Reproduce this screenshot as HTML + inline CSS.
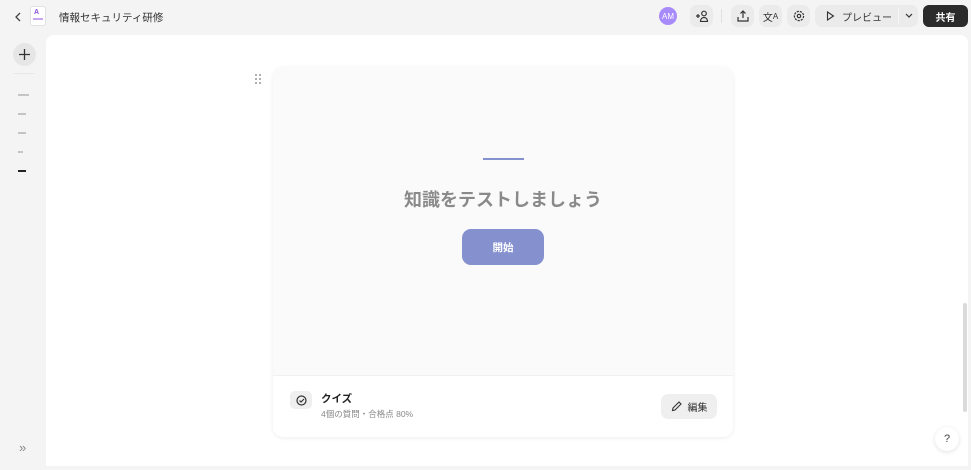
<!DOCTYPE html>
<html><head><meta charset="utf-8"><style>
*{margin:0;padding:0;box-sizing:border-box}
body{width:971px;height:470px;background:#f4f4f4;font-family:"Liberation Sans","Noto Sans CJK JP",sans-serif;position:relative;overflow:hidden;color:#222}
.abs{position:absolute}
.btn{position:absolute;background:#ebebeb;border-radius:7px;display:flex;align-items:center;justify-content:center}
</style></head><body>
<!-- top bar -->
<svg class="abs" style="left:14px;top:12px" width="8" height="10" viewBox="0 0 8 10"><path d="M6 1L2 5l4 4" fill="none" stroke="#444" stroke-width="1.3"/></svg>
<div class="abs" style="left:30px;top:6px;width:16px;height:20px;background:#fff;border:1px solid #e2e2e2;border-radius:3px"></div>
<div class="abs" style="left:34px;top:9px;font-size:7px;color:#8a4fd8;font-weight:bold">A</div>
<div class="abs" style="left:33px;top:18px;width:10px;height:2px;background:#c9a6f0"></div>
<div class="abs" style="left:59px;top:10px;font-size:10.5px;color:#333">情報セキュリティ研修</div>

<div class="abs" style="left:659px;top:7px;width:18px;height:18px;border-radius:50%;background:#a78bfa;color:#fff;font-size:8px;display:flex;align-items:center;justify-content:center">AM</div>
<div class="btn" style="left:690px;top:5px;width:23px;height:22px"><svg width="14" height="12" viewBox="0 0 14 12"><path d="M1 6h4M3 4v4" stroke="#333" stroke-width="1.2"/><circle cx="9" cy="3.5" r="2.3" fill="none" stroke="#333" stroke-width="1.2"/><path d="M5.5 11.5c0-2.5 1.5-4 3.5-4s3.5 1.5 3.5 4z" fill="none" stroke="#333" stroke-width="1.2"/></svg></div>
<div class="abs" style="left:721px;top:9px;width:1px;height:14px;background:#e0e0e0"></div>
<div class="btn" style="left:731px;top:5px;width:23px;height:22px"><svg width="12" height="12" viewBox="0 0 12 12"><path d="M6 8V1M3.5 3.5L6 1l2.5 2.5M1 7v4h10V7" fill="none" stroke="#333" stroke-width="1.2"/></svg></div>
<div class="btn" style="left:759px;top:5px;width:23px;height:22px;font-size:10px;color:#333">文<span style="font-size:8px">A</span></div>
<div class="btn" style="left:787px;top:5px;width:23px;height:22px"><svg width="12" height="12" viewBox="0 0 12 12"><circle cx="6" cy="6" r="4.6" fill="none" stroke="#333" stroke-width="1.2" stroke-dasharray="2.2 1"/><circle cx="6" cy="6" r="1.7" fill="none" stroke="#333" stroke-width="1.2"/></svg></div>
<div class="btn" style="left:815px;top:5px;width:103px;height:22px;justify-content:flex-start;padding-left:11px;font-size:10px;color:#333">
<svg width="9" height="10" viewBox="0 0 9 10"><path d="M1.5 1l6 4-6 4z" fill="none" stroke="#333" stroke-width="1.1"/></svg><span style="margin-left:7px;white-space:nowrap">プレビュー</span><span style="position:absolute;left:83px;top:2px;width:1px;height:18px;background:#f4f4f4"></span>
<svg style="position:absolute;left:90px;top:8px" width="8" height="6" viewBox="0 0 8 6"><path d="M1 1l3 3 3-3" fill="none" stroke="#333" stroke-width="1.2"/></svg></div>
<div class="abs" style="left:923px;top:5px;width:45px;height:22px;background:#2b2b2b;border-radius:6px;color:#fff;font-size:10px;font-weight:bold;display:flex;align-items:center;justify-content:center">共有</div>

<!-- sidebar -->
<div class="abs" style="left:13px;top:43px;width:23px;height:23px;border-radius:50%;background:#e6e6e6;display:flex;align-items:center;justify-content:center"><svg width="11" height="11"><path d="M5.5 0v11M0 5.5h11" stroke="#333" stroke-width="1.3"/></svg></div>
<div class="abs" style="left:13px;top:73px;width:22px;height:1px;background:#e8e8e8"></div>
<div class="abs" style="left:18px;top:94px;width:11px;height:1.5px;background:#c4c4c4"></div>
<div class="abs" style="left:18px;top:113px;width:8px;height:1.5px;background:#c4c4c4"></div>
<div class="abs" style="left:18px;top:132px;width:8px;height:1.5px;background:#c4c4c4"></div>
<div class="abs" style="left:18px;top:151px;width:5px;height:1.5px;background:#c4c4c4"></div>
<div class="abs" style="left:18px;top:170px;width:8px;height:2px;background:#222"></div>
<div class="abs" style="left:19px;top:440px;font-size:13px;color:#888">»</div>

<!-- main panel -->
<div class="abs" style="left:46px;top:35px;width:922px;height:431px;background:#fff;border-radius:8px 8px 0 0"></div>
<div class="abs" style="left:963px;top:303px;width:4px;height:109px;background:#dadada;border-radius:2px"></div>
<div class="abs" style="left:935px;top:427px;width:24px;height:24px;border-radius:50%;background:#fff;box-shadow:0 1px 4px rgba(0,0,0,.12);font-size:11px;color:#444;display:flex;align-items:center;justify-content:center">?</div>
<svg class="abs" style="left:255px;top:74px" width="6" height="10" viewBox="0 0 6 10"><g fill="#777"><circle cx="1" cy="1" r="0.9"/><circle cx="5" cy="1" r="0.9"/><circle cx="1" cy="5" r="0.9"/><circle cx="5" cy="5" r="0.9"/><circle cx="1" cy="9" r="0.9"/><circle cx="5" cy="9" r="0.9"/></g></svg>

<!-- card -->
<div class="abs" style="left:273px;top:67px;width:460px;height:370px;border-radius:10px;background:#fff;box-shadow:0 1px 4px rgba(0,0,0,.08);overflow:hidden">
 <div style="position:absolute;left:0;top:0;width:460px;height:309px;background:#fafafa;border-bottom:1px solid #f0f0f0"></div>
 <div style="position:absolute;left:210px;top:91px;width:41px;height:2px;background:#8590cf"></div>
 <div style="position:absolute;left:0;top:119px;width:460px;text-align:center;font-size:18px;font-weight:bold;color:#8a8a8a">知識をテストしましょう</div>
 <div style="position:absolute;left:189px;top:162px;width:82px;height:36px;border-radius:9px;background:#8590cf;color:#fff;font-size:10.5px;font-weight:bold;display:flex;align-items:center;justify-content:center">開始</div>
 <div style="position:absolute;left:17px;top:324px;width:22px;height:18px;border-radius:5px;background:#efefef;display:flex;align-items:center;justify-content:center"><svg width="11" height="11" viewBox="0 0 11 11"><circle cx="5.5" cy="5.5" r="4.5" fill="none" stroke="#333" stroke-width="1.2"/><path d="M3.5 5.5l1.5 1.5 3-3" fill="none" stroke="#333" stroke-width="1.2"/></svg></div>
 <div style="position:absolute;left:48px;top:324px;font-size:10.5px;font-weight:bold;color:#222">クイズ</div>
 <div style="position:absolute;left:48px;top:341px;font-size:8.5px;color:#888">4個の質問・合格点 80%</div>
 <div style="position:absolute;left:388px;top:327px;width:56px;height:25px;border-radius:7px;background:#efefef;display:flex;align-items:center;justify-content:center;font-size:10px;color:#333"><svg width="11" height="11" viewBox="0 0 11 11"><path d="M1.5 9.5l.5-2.5 6-6 2 2-6 6z" fill="none" stroke="#333" stroke-width="1.1"/></svg><span style="margin-left:6px">編集</span></div>
</div>
</body></html>
